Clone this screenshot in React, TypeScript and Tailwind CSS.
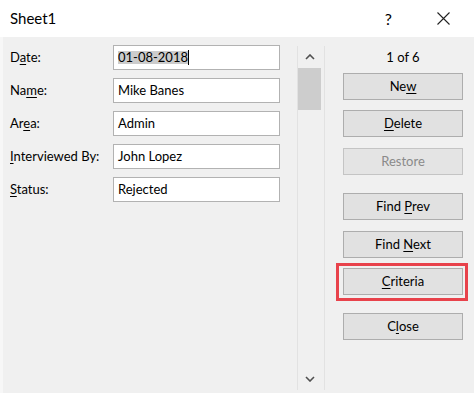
import type { ReactNode } from "react";

function U({ children }: { children: string }) {
  return <span className="underline decoration-1 underline-offset-[2px]">{children}</span>;
}

interface Field {
  label: ReactNode;
  value: string;
  selected?: boolean;
}

const fields: Field[] = [
  { label: <>D<U>a</U>te:</>, value: "01-08-2018", selected: true },
  { label: <>Na<U>m</U>e:</>, value: "Mike Banes" },
  { label: <>Ar<U>e</U>a:</>, value: "Admin" },
  { label: <><U>I</U>nterviewed By:</>, value: "John Lopez" },
  { label: <><U>S</U>tatus:</>, value: "Rejected" },
];

function Button({ children, disabled, className = "" }: { children: ReactNode; disabled?: boolean; className?: string }) {
  return (
    <div
      className={
        "flex h-[27px] w-[120px] items-center justify-center border " +
        (disabled ? "border-[#c4c4c4] bg-[#e4e4e4] text-[#8a8a8a] " : "border-[#adadad] bg-[#e1e1e1] text-black ") +
        className
      }
    >
      <span className="whitespace-pre">{children}</span>
    </div>
  );
}

function Chevron({ down }: { down?: boolean }) {
  return (
    <svg width="10" height="6" viewBox="0 0 10 6" className="block">
      <polyline
        points={down ? "1,1 5,5 9,1" : "1,5 5,1 9,5"}
        fill="none"
        stroke="#505050"
        strokeWidth="1.6"
      />
    </svg>
  );
}

export default function App() {
  return (
    <div className="flex h-[397px] w-[474px] flex-col bg-white font-[Lato,'Liberation_Sans',sans-serif] text-[13px] text-black">
      {/* title bar */}
      <div className="flex h-[37px] shrink-0 items-center pl-[10px] pr-[24px]">
        <span className="flex-1 text-[15px]">Sheet1</span>
        <span className="mr-[45px] text-[16px]">?</span>
        <svg width="13" height="13" viewBox="0 0 13 13">
          <path d="M0.5 0.5 L12.5 12.5 M12.5 0.5 L0.5 12.5" stroke="#222" strokeWidth="1.1" />
        </svg>
      </div>

      {/* body */}
      <div className="mb-[4px] flex flex-1 border-l-[3px] border-[#f7f7f7] bg-[#f0f0f0]">
        <div className="flex w-[294px] flex-col gap-[8px] pl-[7px] pt-[8px]">
          {fields.map((f, i) => (
            <div key={i} className="flex h-[25px] items-center">
              <div className="w-[103px]">{f.label}</div>
              <div className="flex h-[25px] w-[167px] items-center border border-[#b2b2b2] bg-white pl-[4px]">
                {f.selected ? (
                  <>
                    <span className="bg-[#cccccc] leading-[13px]">{f.value}</span>
                    <span className="h-[15px] w-px bg-black" />
                  </>
                ) : (
                  f.value
                )}
              </div>
            </div>
          ))}
        </div>

        {/* scrollbar */}
        <div className="mb-[3px] mt-[9px] flex w-[28px] flex-col border-x border-[#e2e2e2]">
          <div className="flex h-[22px] items-center justify-center pr-[2px]">
            <Chevron />
          </div>
          <div className="h-[42px] w-[23px] bg-[#cdcdcd]" />
          <div className="flex-1" />
          <div className="flex h-[22px] items-center justify-center pr-[2px]">
            <Chevron down />
          </div>
        </div>

        {/* buttons */}
        <div className="flex flex-1 flex-col pl-[18px] pt-[11px]">
          <div className="w-[120px] text-center leading-[18px]">1 of 6</div>
          <Button className="mt-[7px]">Ne<U>w</U></Button>
          <Button className="mt-[10px]"><U>D</U>elete</Button>
          <Button className="mt-[11px]" disabled>Restore</Button>
          <Button className="mt-[18px]">Find <U>P</U>rev</Button>
          <Button className="mt-[11px]">Find <U>N</U>ext</Button>
          <div className="relative mt-[10px] w-[120px]">
            <Button><U>C</U>riteria</Button>
            <span className="absolute -bottom-[6px] -left-[7px] -right-[5px] -top-[5px] border-[3px] border-[#e8424b]" />
          </div>
          <Button className="mt-[18px]">C<U>l</U>ose</Button>
        </div>
      </div>
    </div>
  );
}
